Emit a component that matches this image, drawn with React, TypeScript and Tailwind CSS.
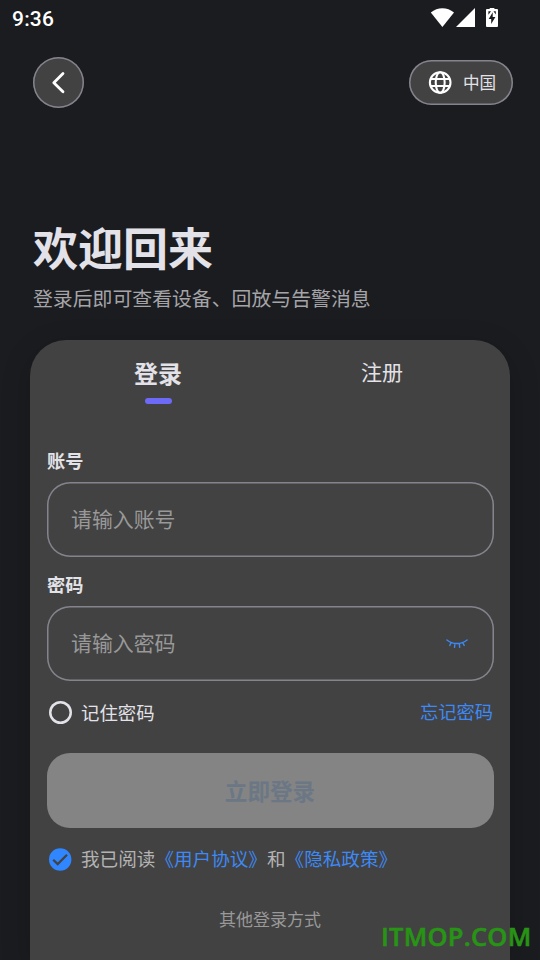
import React from "react";

function StatusBar() {
  return (
    <div className="flex h-[38px] items-center justify-between pl-3 pr-[42px]">
      <span className="font-['Roboto',sans-serif] text-[21px] font-medium leading-[38px] tracking-[0.2px] text-white">9:36</span>
      <svg width="68" height="22" viewBox="0 0 68 22" fill="#fff">
        <path d="M0.800 4.600C7.500-1.200 17.300-1.200 24 4.600L12.400 19z" />
        <path d="M45 0v19H26z" />
        <path
          fillRule="evenodd"
          d="M59.700 -1h4.700v2h2.600q1 0 1 1v16q0 1-1 1h-10q-1 0-1-1V2q0-1 1-1h2.700zM62.700 4.200l-4 6.800h2.500v5l4.200-7h-2.700zM58.400 3.300v3.400l2.600-3.400zM63.500 3.300l2.300 3.200V3.300z"
        />
      </svg>
    </div>
  );
}

function TopBar() {
  return (
    <div className="mt-[19px] flex items-center justify-between pl-[33px] pr-[27px]">
      <button className="flex size-[51px] items-center justify-center rounded-full bg-[#424242] shadow-[inset_0_0_0_1.5px_#85848e]">
        <svg width="24" height="24" viewBox="0 0 24 24" fill="none" stroke="#fff" strokeWidth="2.800" strokeLinecap="round" strokeLinejoin="round">
          <path d="M16 2.600L6.800 11.700L16 20.800" />
        </svg>
      </button>
      <button className="flex h-[45px] w-[104px] items-center rounded-full bg-[#424242] pl-[19px] shadow-[inset_0_0_0_1.5px_#85848e]">
        <svg width="25" height="25" viewBox="0 0 24 24" fill="none" stroke="#fff" strokeWidth="2">
          <circle cx="11.700" cy="12" r="9.900" />
          <ellipse cx="11.700" cy="12" rx="4.300" ry="9.900" />
          <path d="M2.700 8.600H20.700M2.700 15.400H20.700" />
        </svg>
        <span className="-mt-px ml-[10px] text-[16.600px] leading-[24px] text-[#e3e2e8]">中国</span>
      </button>
    </div>
  );
}

function ClosedEye() {
  return (
    <svg width="24" height="12" viewBox="0 0 24 12" fill="none" stroke="#3d89f5" strokeWidth="1.400" strokeLinecap="round">
      <path d="M1.900 2C7.500 6.700 16.500 6.700 22.100 2M6 4.800L4.800 7.500M9.900 5.700L9.500 9.300M14.300 5.700L14.700 9.300M17.800 4.700L19.200 7.400" />
    </svg>
  );
}

function Field({ label, placeholder, children }: { label: string; placeholder: string; children?: React.ReactNode }) {
  return (
    <div>
      <div className="h-[26px] text-[18.200px] font-bold leading-[25px] text-[#e3e2e8]">{label}</div>
      <div className="mt-[8px] flex h-[75px] items-center justify-between rounded-[23px] pl-[24px] pr-[25px] shadow-[inset_0_0_0_1.5px_#85848e]">
        <span className="-mt-[4px] text-[20.900px] leading-[30px] text-[#999999]">{placeholder}</span>
        {children}
      </div>
    </div>
  );
}

export default function App() {
  return (
    <div className="relative flex h-[960px] w-[540px] flex-col overflow-hidden bg-[#1b1c20] font-['Noto_Sans_CJK_SC',sans-serif]">
      <StatusBar />
      <TopBar />
      <h1 className="mt-[106px] pl-[33px] text-[45px] font-bold leading-[66px] text-[#e4e2e9]">欢迎回来</h1>
      <p className="mt-[3px] pl-[33px] text-[19.870px] leading-[30px] text-[#a5a5a8]">登录后即可查看设备、回放与告警消息</p>

      <main className="mx-[30px] mt-[27px] flex flex-1 flex-col rounded-t-[36px] bg-[#424242] pl-[17px] pr-[16px] shadow-[0_8px_30px_rgba(0,0,0,0.2)]">
        <div className="flex h-[64px]">
          <div className="flex w-[223px] flex-col items-center pt-[15px]">
            <span className="-ml-px text-[24px] font-bold leading-[36px] text-[#e3e2e8]">登录</span>
            <span className="mt-[7px] h-[6px] w-[27px] rounded-full bg-[#6e6af8]" />
          </div>
          <div className="flex w-[224px] flex-col items-center pt-[15px]">
            <span className="text-[21px] leading-[32px] text-[#e3e2e8]">注册</span>
          </div>
        </div>

        <div className="mt-[44px] flex flex-col gap-[15px]">
          <Field label="账号" placeholder="请输入账号" />
          <Field label="密码" placeholder="请输入密码">
            <ClosedEye />
          </Field>
        </div>

        <div className="mt-[17px] flex h-[28px] items-center">
          <span className="ml-[2px] size-[23px] rounded-full shadow-[inset_0_0_0_2.500px_#e3e2e8]" />
          <span className="ml-[9px] text-[18.400px] leading-[28px] text-[#e3e2e8]">记住密码</span>
          <span className="-mt-[2px] ml-auto pr-px text-[18.300px] leading-[28px] text-[#3d89f5]">忘记密码</span>
        </div>

        <button className="mt-[27px] h-[75px] w-full rounded-[23px] bg-[#848484] pr-px text-[22.600px] font-bold leading-[34px] text-[#6b7785]">
          立即登录
        </button>

        <div className="mt-[17px] flex h-[28px] items-center text-[18.600px] leading-[28px] text-[#b3b3b3]">
          <svg width="23" height="23" viewBox="0 0 23 23" className="ml-[2px] mr-[9px]">
            <circle cx="11.200" cy="11.500" r="11.200" fill="#2f86ff" />
            <path d="M4.200 11.700L8.700 16.100L18 6.700" fill="none" stroke="#424242" strokeWidth="2.200" />
          </svg>
          <span className="-mt-[2px]">
            我已阅读<span className="text-[#3d89f5]">《用户协议》</span>和<span className="text-[#3d89f5]">《隐私政策》</span>
          </span>
        </div>

        <div className="mt-[33px] pr-px text-center text-[17px] leading-[26px] text-[#999999]">其他登录方式</div>
      </main>

      <div className="absolute left-[381px] top-[918px] font-['Open_Sans',sans-serif] text-[25.500px] font-semibold leading-[36px] tracking-[0.250px] text-[#289415] [-webkit-text-stroke:0.6px_#289415]">
        ITMOP.COM
      </div>
    </div>
  );
}
